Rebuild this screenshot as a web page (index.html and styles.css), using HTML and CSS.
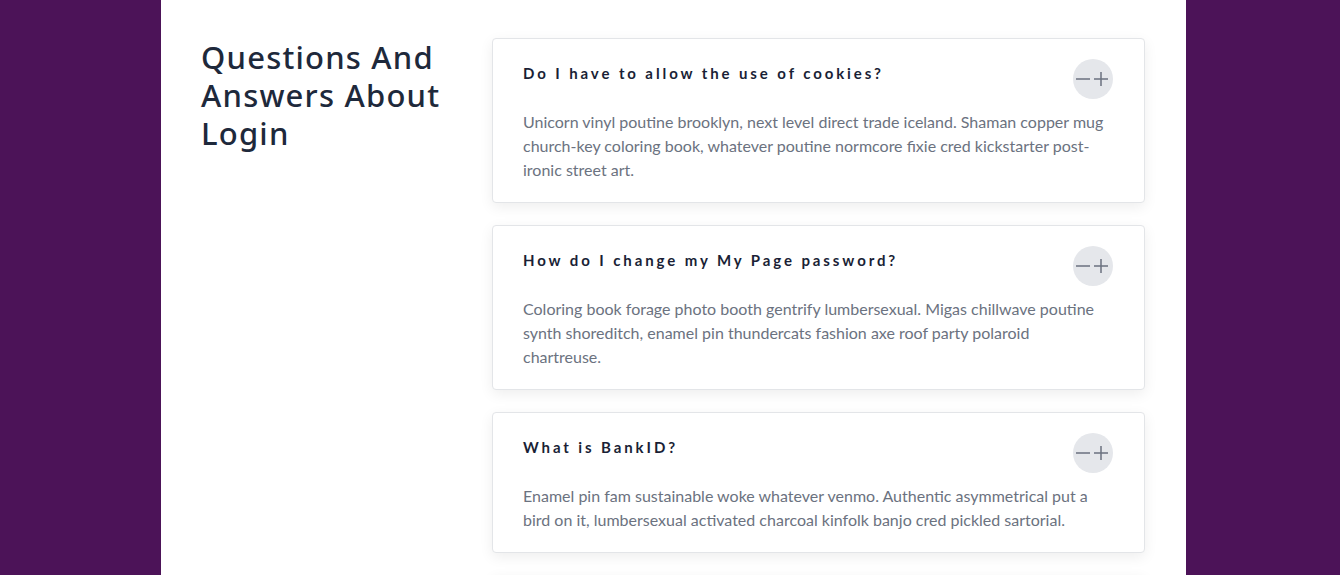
FILE: index.html
```html
<!DOCTYPE html>
<html lang="en">
<head>
<meta charset="utf-8">
<title>FAQ</title>
<link rel="stylesheet" href="styles.css">
</head>
<body>
<div class="page">
  <section class="faq">
    <h1 class="faq-title">Questions And Answers About Login</h1>
    <div class="faq-list">
      <div class="card">
        <div class="card-head">
          <h3 class="card-q">Do I have to allow the use of cookies?</h3>
          <button class="toggle" aria-label="toggle">
            <svg width="40" height="40" viewBox="0 0 40 40"><path d="M3 20h14M21 20h14M28 13v14" stroke="#6b7280" stroke-width="1.5" fill="none"/></svg>
          </button>
        </div>
        <p class="card-a">Unicorn vinyl poutine brooklyn, next level direct trade iceland. Shaman copper mug church-key coloring book, whatever poutine normcore fixie cred kickstarter post-ironic street art.</p>
      </div>
      <div class="card">
        <div class="card-head">
          <h3 class="card-q">How do I change my My Page password?</h3>
          <button class="toggle" aria-label="toggle">
            <svg width="40" height="40" viewBox="0 0 40 40"><path d="M3 20h14M21 20h14M28 13v14" stroke="#6b7280" stroke-width="1.5" fill="none"/></svg>
          </button>
        </div>
        <p class="card-a">Coloring book forage photo booth gentrify lumbersexual. Migas chillwave poutine synth shoreditch, enamel pin thundercats fashion axe roof party polaroid chartreuse.</p>
      </div>
      <div class="card">
        <div class="card-head">
          <h3 class="card-q">What is BankID?</h3>
          <button class="toggle" aria-label="toggle">
            <svg width="40" height="40" viewBox="0 0 40 40"><path d="M3 20h14M21 20h14M28 13v14" stroke="#6b7280" stroke-width="1.5" fill="none"/></svg>
          </button>
        </div>
        <p class="card-a">Enamel pin fam sustainable woke whatever venmo. Authentic asymmetrical put a bird on it, lumbersexual activated charcoal kinfolk banjo cred pickled sartorial.</p>
      </div>
      <div class="card card-next"></div>
    </div>
  </section>
</div>
</body>
</html>
```

FILE: styles.css
```css
* { box-sizing: border-box; }
html, body { margin: 0; padding: 0; }
body {
  background: #4c1358;
  font-family: Lato, "Noto Sans", sans-serif;
  height: 575px;
  overflow: hidden;
}
.page {
  width: 1025px;
  margin-left: 161px;
  background: #ffffff;
  min-height: 575px;
  padding: 38px 41px 38px 40px;
}
.faq {
  display: grid;
  grid-template-columns: 291px 653px;
}
.faq-title {
  margin: 0;
  font-family: "Noto Sans", Lato, sans-serif;
  font-size: 31px;
  line-height: 38px;
  font-weight: 500;
  letter-spacing: 1.2px;
  color: #1e293b;
  padding-right: 40px;
}
.faq-list {
  display: flex;
  flex-direction: column;
  gap: 22px;
}
.card {
  background: #fff;
  border: 1px solid #e3e5e8;
  border-radius: 4px;
  box-shadow: 0 4px 14px rgba(0, 0, 0, 0.07);
  padding: 20px 31px 20px 30px;
}
.card-next { height: 120px; }
.card-head {
  display: flex;
  justify-content: space-between;
  align-items: flex-start;
}
.card-q {
  margin: 0;
  font-size: 15px;
  line-height: 28px;
  font-weight: 700;
  letter-spacing: 2.9px;
  color: #1a1f36;
}
.toggle {
  width: 40px;
  height: 40px;
  padding: 0;
  border: none;
  border-radius: 50%;
  background: #e5e7eb;
  flex: none;
  display: flex;
  align-items: center;
  justify-content: center;
}
.card-a {
  margin: 11px 0 0;
  padding-right: 4px;
  font-size: 16px;
  line-height: 24px;
  color: #6b7280;
}
```
